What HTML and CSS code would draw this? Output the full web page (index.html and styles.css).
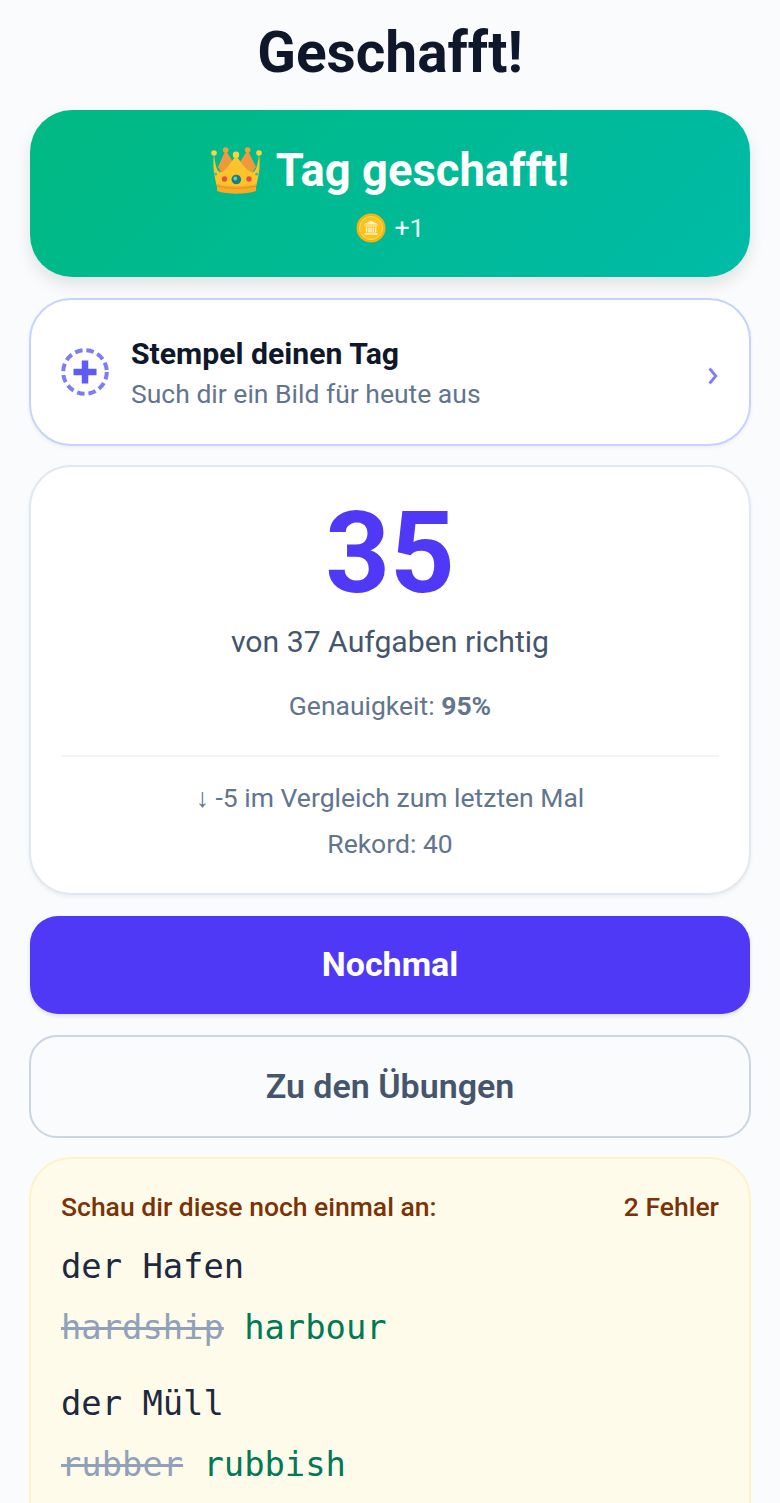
FILE: index.html
```html
<!DOCTYPE html>
<html lang="de">
<head>
<meta charset="utf-8">
<title>Geschafft!</title>
<link rel="stylesheet" href="styles.css">
</head>
<body>
<main class="page">
  <h1 class="title">Geschafft!</h1>
  <section class="banner">
    <div class="banner-head">
      <svg class="crown" viewBox="7 8 52 48" aria-hidden="true">
        <path d="M21.700 11 L14 28 L20 38 L45 38 L52 28 L43.700 11 L36 23 L32 18 L29 23Z" fill="#ee9a3a"/>
        <circle cx="21.700" cy="11" r="2.800" fill="#f0a13e"/><circle cx="43.700" cy="11" r="2.800" fill="#f0a13e"/>
        <path d="M10 15 C11 25 13 35 18 33 C22 31 27 24 32 16 C37 24 42 31 47 33 C52 35 54 25 55 15 C57 28 54 40 52 48 L13 48 C11 40 8 28 10 15Z" fill="#fcc42a"/>
        <path d="M13 45 C25 48 40 48 52 45 L52 52 C42 55.500 23 55.500 13 52Z" fill="#f7ab26"/>
        <path d="M13 47 C25 50 40 50 52 47" fill="none" stroke="#e98f1c" stroke-width="1"/>
        <circle cx="10" cy="14" r="2.800" fill="#fbd33f"/><circle cx="32" cy="15.700" r="3.200" fill="#fbd33f"/><circle cx="55" cy="14" r="2.800" fill="#fbd33f"/>
        <circle cx="32.300" cy="40.500" r="4.800" fill="#17807f"/><circle cx="31.300" cy="39.500" r="1.900" fill="#5ccfc8"/>
        <circle cx="20.500" cy="40" r="2.700" fill="#e2503f"/><circle cx="45" cy="40" r="2.700" fill="#e2503f"/>
        <circle cx="11.500" cy="35" r="1.600" fill="#4fb6b0"/><circle cx="52.700" cy="35" r="1.600" fill="#4fb6b0"/>
      </svg>
      <h2 class="banner-title">Tag geschafft!</h2>
    </div>
    <div class="banner-sub">
      <svg class="coin" viewBox="0 0 30 30" aria-hidden="true">
        <circle cx="15" cy="15" r="14.500" fill="#f5b50f"/>
        <circle cx="15" cy="15" r="11.500" fill="#fcc21b" stroke="#f9e17a" stroke-width="0.800"/>
        <path d="M15 7.500 L22.500 11.500 L7.500 11.500Z M8.500 12.500 H21.500 V13.500 H8.500Z M9.800 14.500 H11.300 V19.500 H9.800Z M12.300 14.500 H13.800 V19.500 H12.300Z M14.300 14.500 H15.800 V19.500 H14.300Z M16.500 14.500 H18 V19.500 H16.500Z M18.800 14.500 H20.300 V19.500 H18.800Z M8.500 20.300 H21.500 V21.800 H8.500Z" fill="#fff3c4"/>
      </svg>
      <span>+1</span>
    </div>
  </section>
  <a class="stamp">
    <svg class="stamp-icon" viewBox="0 0 48 48" aria-hidden="true">
      <circle cx="24" cy="24" r="21.800" fill="none" stroke="#7c7cf8" stroke-width="4" stroke-dasharray="7.500 4"/>
      <path d="M24 12.500 V35.500 M12.500 24 H35.500" stroke="#5f5bf5" stroke-width="6.500" fill="none"/>
    </svg>
    <div class="stamp-text">
      <strong class="stamp-title">Stempel deinen Tag</strong>
      <span class="stamp-sub">Such dir ein Bild für heute aus</span>
    </div>
    <svg class="chevron" viewBox="0 0 10 18" aria-hidden="true"><path d="M1.500 1.500 L7.800 9 L1.500 16.500" fill="none" stroke="#7b80f2" stroke-width="2.800"/></svg>
  </a>
  <section class="score">
    <div class="score-num">35</div>
    <p class="score-label">von 37 Aufgaben richtig</p>
    <p class="score-acc">Genauigkeit: <b>95%</b></p>
    <hr class="score-rule">
    <p class="score-line">↓ -5 im Vergleich zum letzten Mal</p>
    <p class="score-line score-rec">Rekord: 40</p>
  </section>
  <button class="btn btn-primary">Nochmal</button>
  <button class="btn btn-secondary">Zu den Übungen</button>
  <section class="review">
    <div class="review-head"><span>Schau dir diese noch einmal an:</span><span>2 Fehler</span></div>
    <div class="item">
      <div class="word">der Hafen</div>
      <div class="answer"><s>hardship</s> <span class="right">harbour</span></div>
    </div>
    <div class="item">
      <div class="word">der Müll</div>
      <div class="answer"><s>rubber</s> <span class="right">rubbish</span></div>
    </div>
  </section>
</main>
</body>
</html>
```
FILE: styles.css
```css
* { box-sizing: border-box; }
html, body { margin: 0; height: 100%; }
body { background: #f9fbfd; font-family: Roboto, sans-serif; color: #0f172a; overflow: hidden; }
.page { height: 1503px; overflow: hidden; padding: 20px 30px 0; display: flex; flex-direction: column; }
.title { margin: 0 0 24px; font-size: 56.800px; line-height: 66px; font-weight: 700; text-align: center; color: #0f172a; }
.banner { height: 167px; flex: none; border-radius: 42px; background: linear-gradient(135deg, #00b982, #00bba7); color: #fff; text-align: center; box-shadow: 0 8px 16px rgba(0,0,0,.1); padding-top: 31px; }
.banner-head { display: flex; justify-content: center; align-items: center; gap: 13px; height: 60px; }
.crown { width: 52px; height: 48px; }
.banner-title { margin: 0; font-size: 45.400px; line-height: 60px; font-weight: 700; }
.banner-sub { display: flex; justify-content: center; align-items: center; gap: 9px; margin-top: 12px; font-size: 26.500px; line-height: 30px; color: #f0fdf9; }
.coin { width: 30px; height: 30px; }
.stamp { margin-top: 21px; height: 148px; flex: none; margin-inline: -1px; display: flex; align-items: center; border: 2px solid #c7d2fe; border-radius: 42px; background: #fff; padding: 0 30px; box-shadow: 0 2px 4px rgba(0,0,0,.05); }
.stamp-icon { width: 48px; height: 48px; flex: none; }
.stamp-text { flex: 1; margin-left: 22px; display: flex; flex-direction: column; gap: 6px; }
.stamp-title { margin-top: 2px; font-size: 30.200px; line-height: 36px; font-weight: 700; color: #0f172a; }
.stamp-sub { font-size: 26.500px; line-height: 32px; color: #62748e; }
.chevron { width: 10px; height: 18px; flex: none; margin-right: 1px; margin-top: 7px; }
.score { margin-top: 19px; height: 430px; flex: none; margin-inline: -1px; border: 2px solid #e2e8f0; border-radius: 42px; background: #fff; text-align: center; padding: 31px 30px 0; box-shadow: 0 2px 4px rgba(0,0,0,.06); }
.score-num { font-size: 113px; line-height: 112px; font-weight: 700; color: #4f39f6; }
.score-label { margin: 10px 0 0; font-size: 30.200px; line-height: 44px; color: #45556c; }
.score-acc { margin: 24px 0 0; font-size: 26.500px; line-height: 36px; color: #62748e; }
.score-acc b { font-weight: 700; }
.score-rule { margin: 31px 0 0; border: 0; border-top: 2px solid #f1f5f9; }
.score-line { margin: 23px 0 0; font-size: 26.500px; line-height: 36px; color: #62748e; }
.score-rec { margin-top: 10px; }
.btn { display: block; width: 100%; flex: none; font-family: inherit; font-weight: 700; cursor: pointer; text-align: center; padding: 0 0 2px; }
.btn-primary { margin-top: 21px; height: 98px; border: 0; border-radius: 28px; background: #4f39f6; color: #fff; font-size: 34px; box-shadow: 0 2px 4px rgba(0,0,0,.12); }
.btn-secondary { margin: 21px -1px 0; width: calc(100% + 2px); height: 103px; border: 2px solid #cbd5e1; border-radius: 28px; background: transparent; color: #45556c; font-size: 34px; font-weight: 600; }
.review { margin: 19px -1px 0; flex: none; height: 400px; border: 2px solid #fef3c6; border-radius: 42px; background: #fffbeb; padding: 30px 30px 0; }
.review-head { display: flex; justify-content: space-between; margin-bottom: 12px; font-size: 26.500px; line-height: 36px; font-weight: 500; color: #7b3306; }
.item { margin-bottom: 15px; }
.word, .answer { font-family: "DejaVu Sans Mono", monospace; font-size: 33.800px; line-height: 60px; }
.answer { line-height: 62px; }
.word { color: #1d293d; }
.answer s { color: #90a1b9; }
.right { color: #007a55; }
```
